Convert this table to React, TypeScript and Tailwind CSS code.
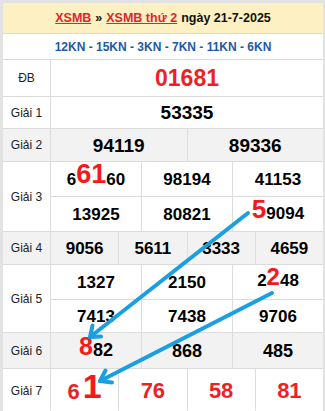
import React from "react";

const red = "text-[#ef1f25]";
const hi = "text-[#f41a1a]";

type CellProps = { children: React.ReactNode; className?: string };

function Cell({ children, className = "" }: CellProps) {
  return <div className={`flex items-center justify-center leading-none ${className}`}>{children}</div>;
}

function Row({ label, bg, h, children }: { label: string; bg: string; h: string; children: React.ReactNode }) {
  return (
    <div className={`grid grid-cols-[47px_1fr] gap-px ${h}`}>
      <div className={`${bg} flex items-center justify-center text-[12px] text-[#222]`}>{label}</div>
      {children}
    </div>
  );
}

export default function App() {
  return (
    <div className="relative w-[325px] h-[411px] bg-[#e2e2e2] pt-[3px] pl-[3px] pr-[2px] font-['Liberation_Sans',Arial,sans-serif]">
      <div className="flex flex-col gap-px bg-[#dcdcdc]">
        <div className="h-[30px] bg-[#fdf0c2] flex items-center justify-center text-[12.5px] font-bold text-[#111]">
          <span className="text-[#e0262c] underline">XSMB</span>
          <span className="mx-[4px]">»</span>
          <span className="text-[#e0262c] underline">XSMB thứ 2</span>
          <span className="ml-[4px]">ngày 21-7-2025</span>
        </div>
        <div className="h-[25px] bg-white flex items-center justify-center text-[12px] font-bold text-[#1f58a6]">
          12KN - 15KN - 3KN - 7KN - 11KN - 6KN
        </div>

        <Row label="ĐB" bg="bg-white" h="h-[36px]">
          <Cell className={`bg-white text-[23px] font-bold ${red}`}>01681</Cell>
        </Row>

        <Row label="Giải 1" bg="bg-white" h="h-[31px]">
          <Cell className="bg-white text-[19px] font-bold text-black">53335</Cell>
        </Row>

        <Row label="Giải 2" bg="bg-[#f2f2f2]" h="h-[32px]">
          <div className="grid grid-cols-2 gap-px">
            <Cell className="bg-[#f2f2f2] text-[19px] font-bold text-black">94119</Cell>
            <Cell className="bg-[#f2f2f2] text-[19px] font-bold text-black">89336</Cell>
          </div>
        </Row>

        <Row label="Giải 3" bg="bg-white" h="h-[69px]">
          <div className="grid grid-cols-3 grid-rows-[34px_34px] gap-px text-[17px] font-bold text-black">
            <Cell className="bg-white items-end pb-[8px]">
              6<span className={`${hi} text-[27px]`}>61</span>60
            </Cell>
            <Cell className="bg-white">98194</Cell>
            <Cell className="bg-white">41153</Cell>
            <Cell className="bg-white">13925</Cell>
            <Cell className="bg-white">80821</Cell>
            <Cell className="bg-white items-end pb-[9px]">
              <span className={`${hi} text-[26px]`}>5</span>9094
            </Cell>
          </div>
        </Row>

        <Row label="Giải 4" bg="bg-[#f2f2f2]" h="h-[32px]">
          <div className="grid grid-cols-4 gap-px text-[17px] font-bold text-black">
            <Cell className="bg-[#f2f2f2]">9056</Cell>
            <Cell className="bg-[#f2f2f2]">5611</Cell>
            <Cell className="bg-[#f2f2f2]">3333</Cell>
            <Cell className="bg-[#f2f2f2]">4659</Cell>
          </div>
        </Row>

        <Row label="Giải 5" bg="bg-white" h="h-[67px]">
          <div className="grid grid-cols-3 grid-rows-[34px_32px] gap-px text-[17px] font-bold text-black">
            <Cell className="bg-white">1327</Cell>
            <Cell className="bg-white">2150</Cell>
            <Cell className="bg-white items-end pb-[10px]">
              2<span className={`${hi} text-[24px]`}>2</span>48
            </Cell>
            <Cell className="bg-white">7413</Cell>
            <Cell className="bg-white">7438</Cell>
            <Cell className="bg-white">9706</Cell>
          </div>
        </Row>

        <Row label="Giải 6" bg="bg-[#f2f2f2]" h="h-[35px]">
          <div className="grid grid-cols-3 gap-px text-[18px] font-bold text-black">
            <Cell className="bg-[#f2f2f2] items-end pb-[9px]">
              <span className={`${hi} text-[25px]`}>8</span>82
            </Cell>
            <Cell className="bg-[#f2f2f2]">868</Cell>
            <Cell className="bg-[#f2f2f2]">485</Cell>
          </div>
        </Row>

        <Row label="Giải 7" bg="bg-white" h="h-[39px]">
          <div className={`grid grid-cols-4 gap-px text-[22px] font-bold ${red}`}>
            <Cell className="bg-white items-end pb-[9px]">
              6<span className={`${hi} text-[34px] ml-[3px]`}>1</span>
            </Cell>
            <Cell className="bg-white">76</Cell>
            <Cell className="bg-white">58</Cell>
            <Cell className="bg-white">81</Cell>
          </div>
        </Row>
      </div>

      <svg className="absolute inset-0 pointer-events-none" width="325" height="411" viewBox="0 0 325 411">
        <g stroke="#1a9fe0" strokeWidth="4" strokeLinecap="round" strokeLinejoin="round" fill="none">
          <line x1="248" y1="213" x2="90" y2="337" />
          <polyline points="101,336.5 90,337 92.5,325.5" />
          <line x1="272" y1="293" x2="100" y2="381" />
          <polyline points="112,382.5 100,381 105.5,370.5" />
        </g>
      </svg>
    </div>
  );
}
